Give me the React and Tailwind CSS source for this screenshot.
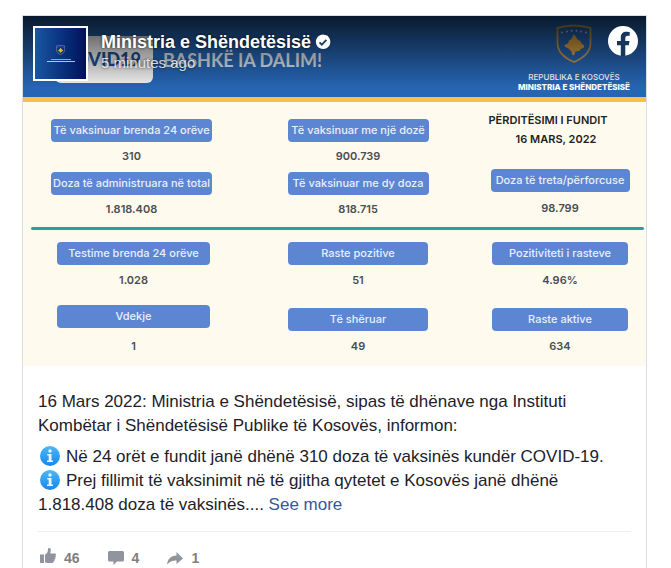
const topStats = [
  [
    { label: 'Të vaksinuar brenda 24 orëve', value: '310' },
    { label: 'Doza të administruara në total', value: '1.818.408' },
  ],
  [
    { label: 'Të vaksinuar me një dozë', value: '900.739' },
    { label: 'Të vaksinuar me dy doza', value: '818.715' },
  ],
]

const bottomStats = [
  [
    { label: 'Testime brenda 24 orëve', value: '1.028' },
    { label: 'Vdekje', value: '1' },
  ],
  [
    { label: 'Raste pozitive', value: '51' },
    { label: 'Të shëruar', value: '49' },
  ],
  [
    { label: 'Pozitiviteti i rasteve', value: '4.96%' },
    { label: 'Raste aktive', value: '634' },
  ],
]

function Crest({ className, stroke, fill }) {
  return (
    <svg viewBox="0 0 36 40" className={className} aria-hidden="true">
      <path
        d="M1.500 4C8 2.600 12 1.500 18 1.500S28 2.600 34.500 4v15c0 9-7 15-16.500 19C8.500 34 1.500 28 1.500 19z"
        fill="none"
        stroke={stroke}
        strokeWidth="1.800"
      />
      <path
        d="M17.500 10.500l2.500 2 1 2.500 3 2 2 3 2.500 1.500-1 2.500-3 1-1 2-4 .5-1.500 4-2-1-.5-3-3-3-4-2 .5-2 3-1 1-3 2.500-1.500z"
        fill={fill}
      />
      <g fill="#b9c4cf">
        <circle cx="6" cy="8.500" r="1" />
        <circle cx="11" cy="7.500" r="1" />
        <circle cx="15.700" cy="6.800" r="1" />
        <circle cx="20.500" cy="6.800" r="1" />
        <circle cx="25" cy="7.500" r="1" />
        <circle cx="30" cy="8.500" r="1" />
      </g>
    </svg>
  )
}

function Stat({ label, value, width, gap = 'mt-1.5' }) {
  return (
    <div className="flex flex-col items-center">
      <dt className={`${width} h-[23px] rounded-[4px] bg-[#5d86d2] text-center text-[11px] leading-[23px] font-medium whitespace-nowrap text-[#e9effa]`}>
        {label}
      </dt>
      <dd className={`${gap} text-[11px] leading-4 font-semibold text-[#4b4d51]`}>{value}</dd>
    </div>
  )
}

function Infographic() {
  return (
    <div className="bg-[#fefaee] font-[Inter,sans-serif]">
      <div className="flex h-[81px] justify-between bg-[#2665b3] pr-4 pl-8">
        <div className="flex items-start font-[Lato,sans-serif]">
          <div className="mt-5 flex h-[47px] w-[98px] items-center justify-end rounded-md bg-[#f2f2f2] pr-3 text-[18px] font-black text-[#1f4f96]">
            COVID19
          </div>
          <p className="mt-8 ml-2.5 text-[18px] leading-6 font-bold text-[#dfe6ef]">BASHKË IA DALIM!</p>
        </div>
        <div className="flex flex-col items-center pt-2">
          <Crest className="h-10 w-9" stroke="#c99a48" fill="#e0a544" />
          <p className="mt-2 text-[8px] leading-[10px] font-medium text-white">REPUBLIKA E KOSOVËS</p>
          <p className="text-[8px] leading-[10px] font-extrabold text-white">MINISTRIA E SHËNDETËSISË</p>
        </div>
      </div>
      <div className="h-[5px] bg-[#fabd55]" />

      <dl className="grid grid-cols-[217fr_236fr_168fr] pt-[17px] pr-0.5 pb-2.5">
        {topStats.map((column, i) => (
          <div key={i} className="flex flex-col gap-2">
            {column.map((stat) => (
              <Stat key={stat.label} {...stat} width={i === 0 ? 'w-[161px]' : 'w-[141px]'} />
            ))}
          </div>
        ))}
        <div className="-mt-2">
          <p className="pr-6 text-center text-[11px] leading-[19px] font-semibold whitespace-nowrap text-[#222]">
            PËRDITËSIMI I FUNDIT
          </p>
          <p className="mb-5 pr-2 text-center text-[11px] leading-[19px] font-semibold text-[#222]">16 MARS, 2022</p>
          <Stat label="Doza të treta/përforcuse" value="98.799" width="w-[139px]" gap="mt-2" />
        </div>
      </dl>
      <div className="mr-0.5 ml-2 h-[3px] rounded-full bg-[#28a09b]" />
      <dl className="grid grid-cols-[217fr_236fr_168fr] pt-3 pr-0.5 pb-3">
        {bottomStats.map((column, i) => (
          <div key={i} className={`flex flex-col justify-between gap-[17px] ${i === 0 ? 'pl-1' : ''}`}>
            {column.map((stat, j) => (
              <Stat
                key={stat.label}
                {...stat}
                width={i === 0 ? 'w-[153px]' : i === 1 ? 'w-[140px]' : 'w-[136px]'}
                gap={i === 0 && j === 1 ? 'mt-2.5' : 'mt-[7px]'}
              />
            ))}
          </div>
        ))}
      </dl>
    </div>
  )
}

function PageHeader() {
  return (
    <header className="absolute inset-x-0 top-0 flex h-[72px] items-start bg-linear-to-b from-black/75 to-transparent px-2.5 pt-2.5">
      <a
        href="#page"
        aria-label="Ministria e Shëndetësisë"
        className="flex size-[55px] shrink-0 flex-col items-center justify-center border-2 border-white bg-linear-to-r from-[#1a56a4] to-[#04105c]"
      >
        <Crest className="h-2.5 w-[9px]" stroke="#b9b18a" fill="#e1b34c" />
        <span className="mt-1 h-px w-5 bg-[#8fa3c9]" />
        <span className="mt-px h-px w-7 bg-[#b5c3dd]" />
      </a>
      <div className="ml-[13px] flex-1 [text-shadow:0_0_3px_rgba(0,0,0,0.8)]">
        <div className="mt-1 flex items-center gap-1">
          <a href="#page" className="text-[18px] leading-6 font-bold text-white">Ministria e Shëndetësisë</a>
          <svg viewBox="0 0 16 16" className="size-4 drop-shadow" role="img" aria-label="Verified">
            <path d="M8 .5l2 .4 2.200.7 1.400 1.500 1.200 1.900.5 2.200-.1 2.300-.8 2.100-1.500 1.700-2 1.200L8.700 15l-2.300-.2-2.100-.9-1.800-1.500-1.100-2L.8 8l.3-2.200 1-2L3.700 2.100l2-1.100z" fill="#fff" />
            <path d="M4.500 8.300l2.300 2.300 4.600-4.800" fill="none" stroke="#233c5c" strokeWidth="1.800" />
          </svg>
        </div>
        <p className="text-[15px] leading-[18px] text-white/80">5 minutes ago</p>
      </div>
      <a href="#facebook" aria-label="Facebook" className="-mr-0.5">
        <svg viewBox="0 0 30 30" className="size-[30px]" aria-hidden="true">
          <circle cx="15" cy="15" r="15" fill="#fff" />
          <path
            d="M12.800 30V19.200H9v-4.300h3.800v-3.400c0-3.800 2.200-5.700 5.600-5.700 1.600 0 3.300.3 3.300.3v3.600h-1.900c-1.900 0-2.500 1.100-2.500 2.300v2.900h4.200l-.7 4.300h-3.500V30z"
            fill="#16375d"
          />
        </svg>
      </a>
    </header>
  )
}

function InfoIcon() {
  return (
    <svg viewBox="0 0 20 20" className="mr-1.5 ml-0.5 inline-block size-5 align-[-4px]" role="img" aria-label="Info">
      <defs>
        <linearGradient id="info" x1="0" y1="0" x2="0" y2="1">
          <stop offset="0" stopColor="#4db8f8" />
          <stop offset="1" stopColor="#1687ee" />
        </linearGradient>
      </defs>
      <circle cx="10" cy="10" r="10" fill="url(#info)" />
      <circle cx="10" cy="5" r="1.700" fill="#e8f6ff" />
      <path d="M7.300 8h4.200v6.500h1.500v1.500H7v-1.500h1.700v-5H7.300z" fill="#e8f6ff" />
    </svg>
  )
}

function Reactions() {
  const button = 'flex items-center gap-2 text-[14px] leading-4 font-bold text-[#7f7f7f]'
  return (
    <footer className="mx-[15px] flex gap-7 border-t border-[#ebedf0] pt-4 pl-0.5">
      <button type="button" aria-label="46 likes" className={button}>
        <svg viewBox="0 0 16 16" className="mb-1 size-4" fill="#90949c" aria-hidden="true">
          <path d="M0 6.500h4V15H0zM5 6.800C7 5.500 8 3.800 8 1c0-.6.5-1 1-1 1.500 0 2 1.300 1.800 2.600L10.300 5.500H15c1.300 0 1.300 1.800.3 2 .9.500.7 1.900-.3 2.100.7.600.4 1.800-.6 2 .5.800 0 1.700-.9 1.800.3.800-.2 1.600-1 1.600H8c-1.300 0-2-.6-3-.8z" />
        </svg>
        46
      </button>
      <button type="button" aria-label="4 comments" className={button}>
        <svg viewBox="0 0 16 16" className="size-4" fill="#90949c" aria-hidden="true">
          <path d="M1.500 1h13Q16 1 16 2.500v7.500q0 1.500-1.500 1.500H9L5.500 15v-3.500h-4Q0 11.500 0 10V2.500Q0 1 1.500 1z" />
        </svg>
        4
      </button>
      <button type="button" aria-label="1 share" className={button}>
        <svg viewBox="0 0 16 16" className="size-4" fill="#90949c" aria-hidden="true">
          <path d="M9.500 2L16 8.500 9.500 14v-3.500C5.500 10.300 2.500 11.500.300 14.500 0 9.500 4 5.500 9.500 5.500z" />
        </svg>
        1
      </button>
    </footer>
  )
}

export default function App() {
  return (
    <div className="flex min-h-screen flex-col bg-white pt-[15px] pr-6 pl-[22px] font-['Liberation_Sans',Arial,sans-serif]">
      <article className="flex-1 border border-b-0 border-[#dadde1]">
        <div className="relative">
          <Infographic />
          <PageHeader />
        </div>
        <div className="px-[15px] pt-6 pb-3.5 text-[17px] leading-6 text-[#1d2129]">
          <p>
            16 Mars 2022: Ministria e Shëndetësisë, sipas të dhënave nga Instituti Kombëtar i Shëndetësisë Publike të
            Kosovës, informon:
          </p>
          <p className="mt-[7px]">
            <InfoIcon />
            Në 24 orët e fundit janë dhënë 310 doza të vaksinës kundër COVID-19.
            <br />
            <InfoIcon />
            Prej fillimit të vaksinimit në të gjitha qytetet e Kosovës janë dhënë 1.818.408 doza të vaksinës....{' '}
            <a href="#more" className="text-[#365899]">See more</a>
          </p>
        </div>
        <Reactions />
      </article>
    </div>
  )
}
